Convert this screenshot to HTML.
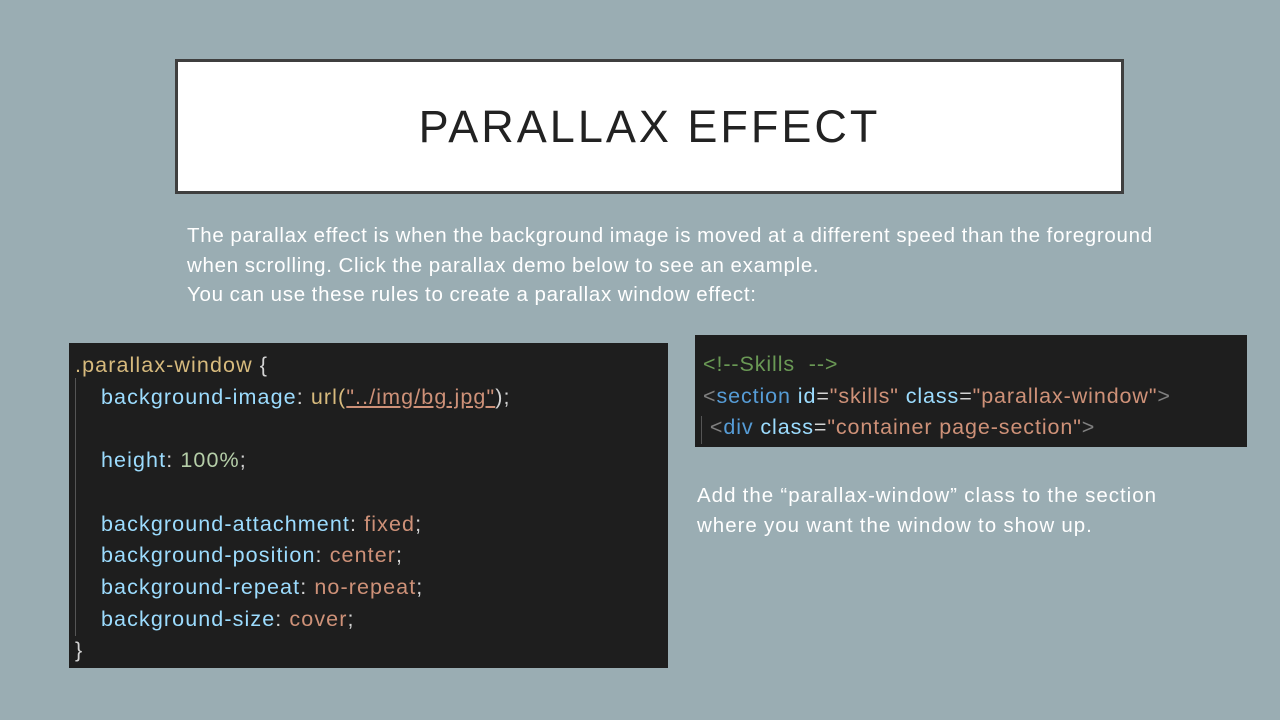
<html><head><style>
body{margin:0;width:1280px;height:720px;background:#9aadb3;position:relative;overflow:hidden;font-family:"Liberation Sans",sans-serif}
.title{position:absolute;left:175px;top:59px;width:943px;height:129px;border:3px solid #3f3f3f;background:#fff;text-align:center;line-height:129px;font-size:45px;color:#222;letter-spacing:3px}
.p{position:absolute;color:#fff;font-size:20.5px;line-height:29.5px;letter-spacing:0.7px;word-spacing:-0.5px}
.code{position:absolute;background:#1e1e1e;font-size:21.5px;line-height:31.7px;color:#9cdcfe;white-space:pre;box-sizing:border-box;letter-spacing:0.9px}
.y{color:#d7ba7d}.o{color:#ce9178}.g{color:#b5cea8}.w{color:#d4d4d4}.c{color:#6a9955}.b{color:#569cd6}.gr{color:#808080}
.bar{position:absolute;width:1px;background:#555}
.i{display:inline-block;width:26px}
.L{letter-spacing:1.1px}
</style></head><body>
<div class="title">PARALLAX EFFECT</div>
<div class="p" style="left:187px;top:221px;width:1050px">The parallax effect is when the background image is moved at a different speed than the foreground<br>when scrolling. Click the parallax demo below to see an example.<br>You can use these rules to create a parallax window effect:</div>
<div class="code L" style="left:69px;top:343px;width:599px;height:325px;padding:7px 0 0 6px"><span class="y">.parallax-window</span><span class="w"> {</span>
<span class="i"></span>background-image<span class="w">: </span><span class="y">url(</span><span class="o" style="text-decoration:underline">"../img/bg.jpg"</span><span class="w">);</span>

<span class="i"></span>height<span class="w">: </span><span class="g">100%</span><span class="w">;</span>

<span class="i"></span>background-attachment<span class="w">: </span><span class="o">fixed</span><span class="w">;</span>
<span class="i"></span>background-position<span class="w">: </span><span class="o">center</span><span class="w">;</span>
<span class="i"></span>background-repeat<span class="w">: </span><span class="o">no-repeat</span><span class="w">;</span>
<span class="i"></span>background-size<span class="w">: </span><span class="o">cover</span><span class="w">;</span>
<span class="w">}</span></div>
<div class="bar" style="left:75px;top:378px;height:258px"></div>
<div class="code" style="left:695px;top:335px;width:552px;height:112px;padding:14px 0 0 8px;line-height:31.5px"><span class="c">&lt;!--Skills  --&gt;</span>
<span class="gr">&lt;</span><span class="b">section</span> id<span class="w">=</span><span class="o">"skills"</span> class<span class="w">=</span><span class="o">"parallax-window"</span><span class="gr">&gt;</span>
 <span class="gr">&lt;</span><span class="b">div</span> class<span class="w">=</span><span class="o">"container page-section"</span><span class="gr">&gt;</span></div>
<div class="bar" style="left:701px;top:416px;height:28px"></div>
<div class="p" style="left:697px;top:481px;width:560px;letter-spacing:1px">Add the “parallax-window” class to the section<br>where you want the window to show up.</div>
</body></html>
